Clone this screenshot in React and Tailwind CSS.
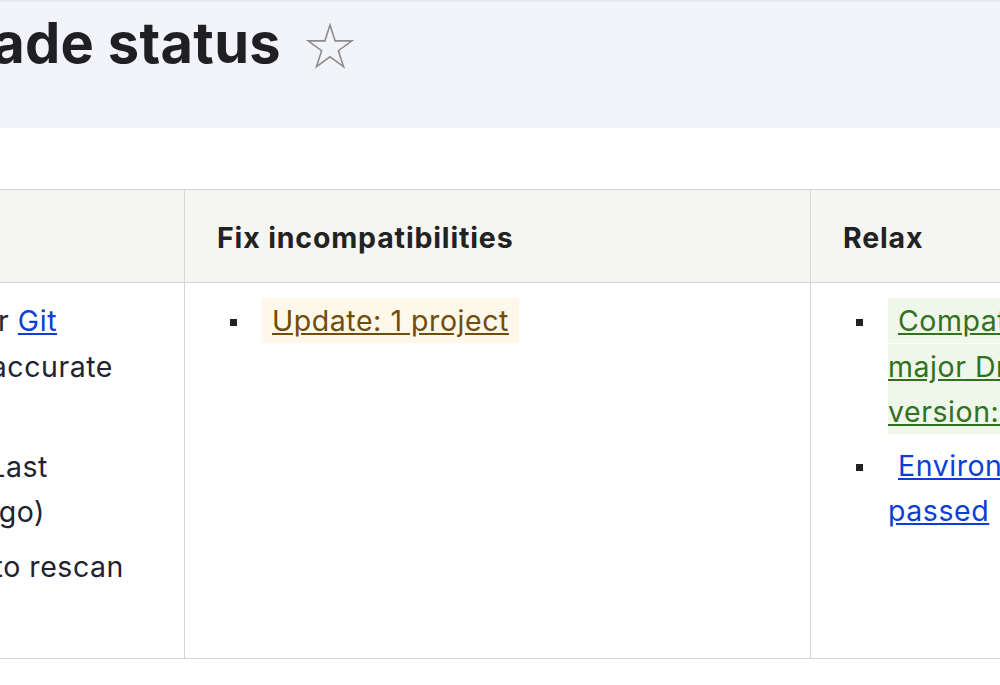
import React from "react";

const BORDER = "border-[#d6d6d6]";

function Bullet() {
  return (
    <span className="w-[45px] h-[45.6px] shrink-0 flex items-center">
      <span className="ml-[13px] mt-[3px] w-[7px] h-[7px] bg-[#222]" />
    </span>
  );
}

function Line({ pr, children }) {
  return (
    <div className={`flex justify-end whitespace-nowrap ${pr}`}>
      <span>{children}</span>
    </div>
  );
}

export default function App() {
  return (
    <div className="w-[1000px] h-[685px] overflow-hidden bg-white text-[#222330] font-['Inter',sans-serif]">
      {/* Page header */}
      <div className="h-[128px] bg-[#f3f4f9] border-t-[2px] border-[#e8e9ee]">
        <div className="flex items-start pt-[14px]">
          <div className="w-[281px] shrink-0 flex justify-end">
            <h1 className="whitespace-nowrap text-[56px] leading-[55px] font-bold tracking-[0.3px] text-[#1f1f24]">
              Upgrade status
            </h1>
          </div>
          <svg
            className="ml-[25px] mt-[7px] shrink-0"
            width="48"
            height="46"
            viewBox="0 0 48 46"
          >
            <polygon
              points="24,2 29.17,17.89 45.87,17.89 32.36,27.72 37.52,43.61 24,33.79 10.48,43.61 15.64,27.72 2.13,17.89 18.83,17.89"
              fill="none"
              stroke="#8c8c8c"
              strokeWidth="1.6"
              strokeLinejoin="miter"
            />
          </svg>
        </div>
      </div>

      {/* Table */}
      <div className={`mt-[61px] border-y ${BORDER} text-[28.5px] leading-[45.6px] tracking-[0.55px]`}>
        <div className={`flex h-[93px] bg-[#f5f5f2] border-b ${BORDER} font-bold tracking-[0.85px] text-[#222]`}>
          <div className={`w-[185px] shrink-0 border-r ${BORDER}`} />
          <div className={`w-[626px] shrink-0 border-r ${BORDER} flex items-center pl-[32px] pt-[4px]`}>
            Fix incompatibilities
          </div>
          <div className="flex-1 flex items-center pl-[32px] pt-[4px] whitespace-nowrap">Relax</div>
        </div>

        <div className="flex h-[375px]">
          {/* Gather data column (cropped) */}
          <div className={`w-[185px] shrink-0 border-r ${BORDER} pt-[15px] flex flex-col gap-[9px]`}>
            <div>
              <Line pr="pr-[127px]">
                Install Composer Deploy or{" "}
                <a className="text-[#0b3fd6] underline decoration-[#0b3fd6]">Git</a>
              </Line>
              <Line pr="pr-[71px]">Deploy for more accurate</Line>
              <Line pr="pr-[200px]">update data.</Line>
            </div>
            <div>
              <Line pr="pr-[136px]">Scanned 1 project (Last</Line>
              <Line pr="pr-[139px]">scan: 5 minutes ago)</Line>
            </div>
            <div>
              <Line pr="pr-[60px]">Use the form below to rescan</Line>
            </div>
          </div>

          {/* Fix incompatibilities */}
          <div className={`w-[626px] shrink-0 border-r ${BORDER} pl-[32px] pt-[15px]`}>
            <ul className="flex flex-col gap-[9px]">
              <li className="flex">
                <Bullet />
                <span className="whitespace-nowrap">
                  <a className="bg-[#fdf8ea] text-[#6f4d0c] underline decoration-[#6f4d0c] px-[10px] py-[5px]">
                    Update: 1 project
                  </a>
                </span>
              </li>
            </ul>
          </div>

          {/* Relax */}
          <div className="flex-1 pl-[32px] pt-[15px]">
            <ul className="flex flex-col gap-[8px]">
              <li className="flex">
                <Bullet />
                <span className="whitespace-nowrap">
                  <a className="bg-[#eef7ea] text-[#33701f] underline decoration-[#33701f] pl-[10px] pr-[10px] py-[5px]">
                    Compatible with next
                    <br />
                    major Drupal
                    <br />
                    version: 1 project
                  </a>
                </span>
              </li>
              <li className="flex">
                <Bullet />
                <span className="whitespace-nowrap">
                  <a className="text-[#0b3fd6] underline decoration-[#0b3fd6] pl-[10px]">
                    Environment checks
                    <br />
                    passed
                  </a>
                </span>
              </li>
            </ul>
          </div>
        </div>
      </div>
    </div>
  );
}
